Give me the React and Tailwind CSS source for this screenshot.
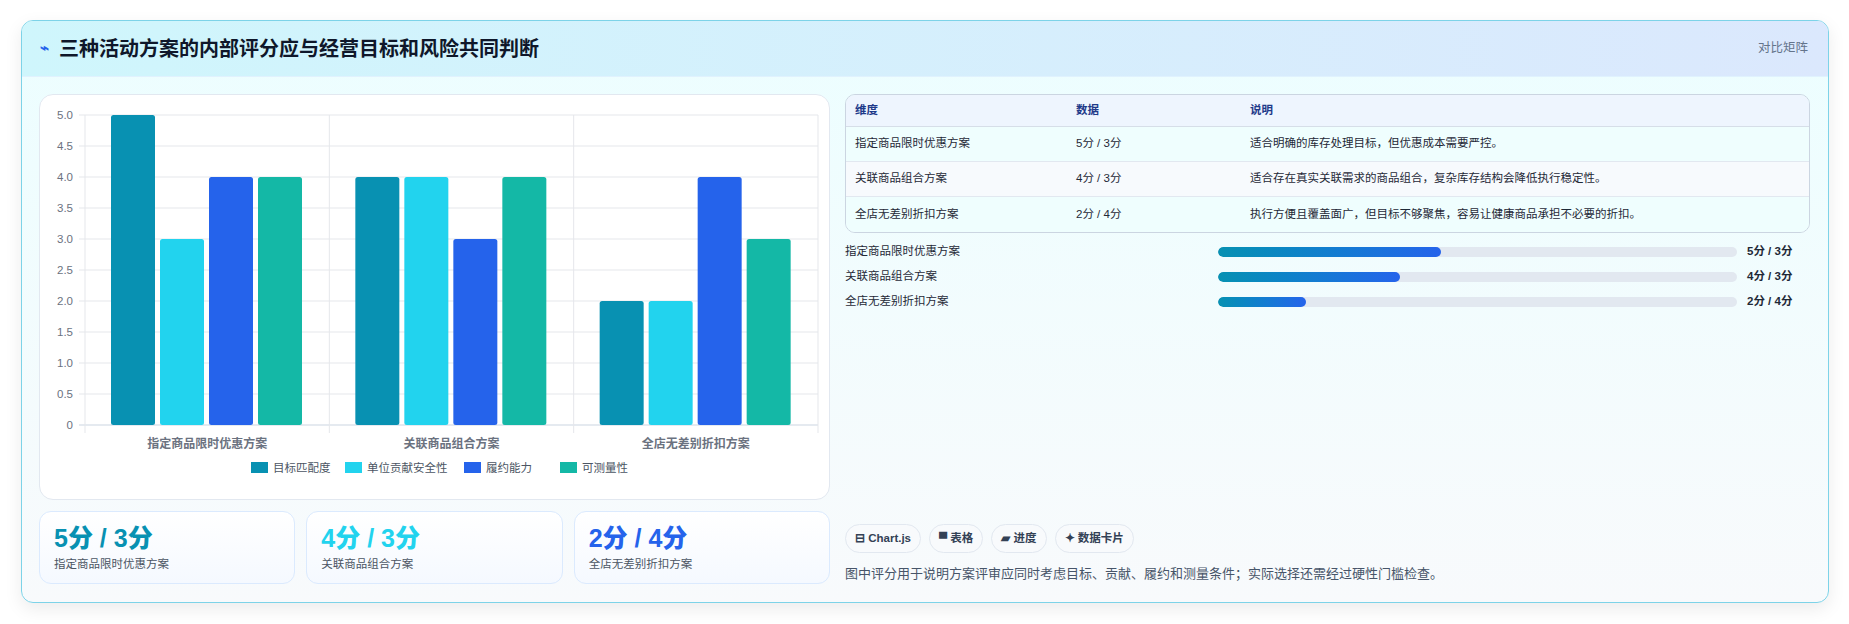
import React from "react";

const colors = ["#0891b2", "#22d3ee", "#2563eb", "#14b8a6"];
const groups = [
  { name: "指定商品限时优惠方案", v: [5, 3, 4, 4] },
  { name: "关联商品组合方案", v: [4, 4, 3, 4] },
  { name: "全店无差别折扣方案", v: [2, 2, 4, 3] },
];
const legend = ["目标匹配度", "单位贡献安全性", "履约能力", "可测量性"];

function Chart() {
  const L = 45, R = 778, T = 20, B = 330;
  const gw = (R - L) / 3;
  const y = (v) => B - (v / 5) * (B - T);
  const ticks = [0, 0.5, 1, 1.5, 2, 2.5, 3, 3.5, 4, 4.5, 5];
  return (
    <svg width="789" height="404" viewBox="0 0 789 404" style={{ fontFamily: "'Liberation Sans','Noto Sans CJK SC',sans-serif" }}>
      {ticks.map((t) => (
        <g key={t}>
          <line x1={L - 6} x2={R} y1={y(t)} y2={y(t)} stroke={t === 0 ? "#cbd5e1" : "#e5e7eb"} />
          <text x={L - 12} y={y(t) + 4} fontSize="11.5" fill="#6b7280" textAnchor="end">{t === 0 ? "0" : t.toFixed(1)}</text>
        </g>
      ))}
      {[0, 1, 2, 3].map((i) => (
        <line key={i} x1={L + i * gw} x2={L + i * gw} y1={T} y2={B + 8} stroke="#e5e7eb" />
      ))}
      {groups.map((g, gi) =>
        g.v.map((v, i) => (
          <rect key={gi + "-" + i} x={L + gi * gw + 26 + i * 49} y={y(v)} width="44" height={B - y(v)} rx="2.5" fill={colors[i]} />
        ))
      )}
      {groups.map((g, gi) => (
        <text key={g.name} x={L + gi * gw + gw / 2} y={353} fontSize="12" fill="#6b7280" fontWeight="600" textAnchor="middle">{g.name}</text>
      ))}
      {(() => {
        const xs = [211, 305, 424, 520];
        return legend.map((l, i) => (
          <g key={l}>
            <rect x={xs[i]} y={367} width="17" height="11" fill={colors[i]} />
            <text x={xs[i] + 22} y={377} fontSize="11.5" fill="#4b5563">{l}</text>
          </g>
        ));
      })()}
    </svg>
  );
}

const rows = [
  ["指定商品限时优惠方案", "5分 / 3分", "适合明确的库存处理目标，但优惠成本需要严控。", 43],
  ["关联商品组合方案", "4分 / 3分", "适合存在真实关联需求的商品组合，复杂库存结构会降低执行稳定性。", 35],
  ["全店无差别折扣方案", "2分 / 4分", "执行方便且覆盖面广，但目标不够聚焦，容易让健康商品承担不必要的折扣。", 17],
];

export default function App() {
  return (
    <div className="w-[1849px] h-[624px] bg-white pt-[20px] pl-[21px]" style={{ fontFamily: "'Liberation Sans','Noto Sans CJK SC',sans-serif" }}>
      <div className="w-[1808px] h-[583px] rounded-[12px] border border-[#7dd3e8] shadow-[0_6px_18px_rgba(0,0,0,0.08)] overflow-hidden bg-gradient-to-b from-[#ecfeff] to-[#f8fafc]">
        <div className="h-[56px] flex items-center justify-between px-[18px] bg-gradient-to-r from-[#cff6fc] to-[#dbe8fd] border-b border-[#e0f2fe]">
          <div className="flex items-center gap-[10px]">
            <span className="text-[#2563eb] text-[15px] font-bold">⌁</span>
            <span className="text-[20px] font-bold text-[#0f172a]">三种活动方案的内部评分应与经营目标和风险共同判断</span>
          </div>
          <span className="text-[12.5px] text-[#64748b] mr-[2px]">对比矩阵</span>
        </div>
        <div className="flex gap-[15px] pl-[17px] pt-[17px]">
          <div className="w-[791px] flex flex-col gap-[11px]">
            <div className="h-[406px] rounded-[14px] border border-[#e2e8f0] bg-white overflow-hidden">
              <Chart />
            </div>
            <div className="grid grid-cols-3 gap-[11px]">
              {[["5分 / 3分", "text-[#0891b2]", rows[0][0]], ["4分 / 3分", "text-[#22d3ee]", rows[1][0]], ["2分 / 4分", "text-[#2563eb]", rows[2][0]]].map(([v, c, n]) => (
                <div key={n} className="h-[73px] rounded-[12px] border border-[#dbeafe] bg-gradient-to-b from-white to-[#f5f9ff] px-[14px] pt-[10px]">
                  <div className={"text-[25px] font-extrabold leading-[32px] " + c}>{v}</div>
                  <div className="text-[11.5px] text-[#4b5563] mt-[2px]">{n}</div>
                </div>
              ))}
            </div>
          </div>
          <div className="w-[965px] flex flex-col">
            <div className="rounded-[10px] border border-[#cbd5e1] overflow-hidden text-[11.5px]">
              <div className="flex h-[32px] items-center bg-[#eef5fe] text-[#1e3a8a] font-semibold border-b border-[#d6dee8]">
                <div className="w-[230px] pl-[9px]">维度</div>
                <div className="w-[174px]">数据</div>
                <div>说明</div>
              </div>
              {rows.map((r, i) => (
                <div key={r[0]} className={"flex h-[35px] items-center text-[#1f2937] " + (i < 2 ? "border-b border-[#e2e8f0] " : "") + (i === 1 ? "bg-[#f7fafd]" : "bg-[#effefe]")}>
                  <div className="w-[230px] pl-[9px]">{r[0]}</div>
                  <div className="w-[174px]">{r[1]}</div>
                  <div>{r[2]}</div>
                </div>
              ))}
            </div>
            <div className="flex flex-col gap-[10px] mt-[11px] text-[11.5px]">
              {rows.map((r) => (
                <div key={r[0]} className="flex items-center h-[15px]">
                  <div className="w-[373px] text-[#1f2937]">{r[0]}</div>
                  <div className="w-[519px] h-[10px] rounded-full bg-[#e2e8f0] overflow-hidden">
                    <div className="h-full rounded-full bg-gradient-to-r from-[#0891b2] to-[#2563eb]" style={{ width: r[3] + "%" }} />
                  </div>
                  <div className="ml-[10px] font-bold text-[#1f2937]">{r[1]}</div>
                </div>
              ))}
            </div>
            <div className="flex gap-[8px] mt-[215px] text-[11.5px] font-semibold text-[#334155]">
              {["⊟ Chart.js", "▀ 表格", "▰ 进度", "✦ 数据卡片"].map((c) => (
                <span key={c} className="h-[29px] px-[9px] flex items-center rounded-full border border-[#e2e8f0] bg-[#f8fafc]">{c}</span>
              ))}
            </div>
            <div className="mt-[11px] text-[13px] text-[#475569]">图中评分用于说明方案评审应同时考虑目标、贡献、履约和测量条件；实际选择还需经过硬性门槛检查。</div>
          </div>
        </div>
      </div>
    </div>
  );
}
